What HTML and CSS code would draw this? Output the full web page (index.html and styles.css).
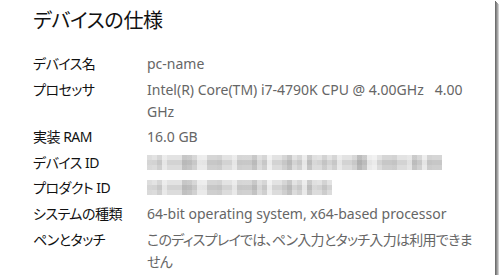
FILE: index.html
```html
<!DOCTYPE html>
<html lang="ja">
<head>
<meta charset="utf-8">
<link rel="stylesheet" href="styles.css">
</head>
<body>
<div class="frame">
  <h1 class="title">デバイスの仕様</h1>
  <dl class="specs">
    <dt>デバイス名</dt><dd>pc-name</dd>
    <dt>プロセッサ</dt><dd>Intel(R) Core(TM) i7-4790K CPU @ 4.00GHz&nbsp;&nbsp; 4.00 GHz</dd>
    <dt>実装 RAM</dt><dd>16.0 GB</dd>
    <dt>デバイス ID</dt><dd><span class="mosaic mosaic-long"></span></dd>
    <dt>プロダクト ID</dt><dd><span class="mosaic mosaic-short"></span></dd>
    <dt>システムの種類</dt><dd>64-bit operating system, x64-based processor</dd>
    <dt>ペンとタッチ</dt><dd class="ja">このディスプレイでは、ペン入力とタッチ入力は利用できません</dd>
  </dl>
</div>
</body>
</html>
```
FILE: styles.css
```css
html, body {
  margin: 0;
  padding: 0;
  background: #ffffff;
}
body {
  font-family: "Noto Sans", "Noto Sans CJK JP", sans-serif;
  font-feature-settings: "palt";
}
.frame {
  width: 495px;
  height: 275px;
  background: #ffffff;
  box-sizing: border-box;
  padding: 7px 0 0 33px;
  box-shadow: 1px 1px 0 #6f6f6f, 2px 2px 0 #8a8a8a, 3px 3px 0 #a8a8a8, 4px 4px 0 #cfcfcf;
  overflow: hidden;
}
.title {
  margin: 0 0 18px 0;
  font-size: 20px;
  line-height: 28px;
  font-weight: 400;
  color: #111;
  letter-spacing: -0.3px;
}
.specs {
  display: grid;
  grid-template-columns: 114px 332px;
  row-gap: 3.6px;
  margin: 0;
  font-size: 14px;
  line-height: 22px;
}
.specs dt {
  color: #111;
  letter-spacing: -0.5px;
}
.specs dd {
  margin: 0;
  color: #666;
}
.specs dd.ja {
  letter-spacing: -0.7px;
}
.mosaic {
  display: block;
  height: 15px;
  margin-top: 3px;
  background:
    repeating-linear-gradient(90deg, rgba(0,0,0,0.07) 0 5px, transparent 5px 15px, rgba(255,255,255,0.55) 15px 20px, transparent 20px 35px),
    repeating-linear-gradient(90deg, transparent 0 10px, rgba(0,0,0,0.06) 10px 20px, transparent 20px 25px),
    repeating-linear-gradient(90deg, rgba(255,255,255,0.4) 0 5px, transparent 5px 40px, rgba(0,0,0,0.05) 40px 55px),
    linear-gradient(180deg, #e3e3e3 0 5px, #d3d3d3 5px 10px, #dcdcdc 10px 15px);
}
.mosaic-long { width: 295px; }
.mosaic-short { width: 185px; }
```
